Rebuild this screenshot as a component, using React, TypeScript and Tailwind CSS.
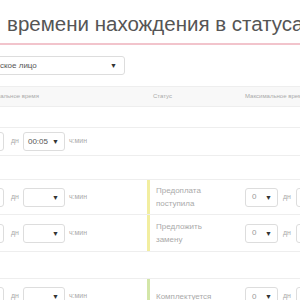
import React from "react";

const Arrow = () => <span className="text-[7px] text-[#333] leading-none">▼</span>;

function TimeInputs({ value = "" }: { value?: string }) {
  return (
    <div className="flex items-center h-full">
      <div className="w-[10px] h-[19px] -ml-[6px] border border-[#ddd] rounded-[3px] bg-white" />
      <span className="ml-[7px] text-[7px] text-[#aaa]">дн</span>
      <div className="ml-[4px] w-[42px] h-[19px] border border-[#ddd] rounded-[3px] bg-white flex items-center justify-between pl-[4px] pr-[5px]">
        <span className="text-[8px] text-[#555]">{value}</span>
        <Arrow />
      </div>
      <span className="ml-[4px] text-[7px] text-[#aaa]">ч:мин</span>
    </div>
  );
}

function RightInputs() {
  return (
    <div className="flex items-center h-full">
      <div className="w-[33px] h-[19px] border border-[#ddd] rounded-[3px] bg-white flex items-center justify-between pl-[6px] pr-[5px]">
        <span className="text-[8px] text-[#999]">0</span>
        <Arrow />
      </div>
      <span className="ml-[5px] text-[7px] text-[#aaa]">дн</span>
      <div className="ml-[5px] w-[30px] h-[19px] border border-[#ddd] rounded-[3px] bg-white" />
    </div>
  );
}

function Row({ h, left, status, bar, right }: { h: string; left?: React.ReactNode; status?: React.ReactNode; bar?: string; right?: React.ReactNode }) {
  return (
    <div className={`flex border-t border-[#eee] ${h}`}>
      <div className="w-[147px] shrink-0">{left}</div>
      <div className={`w-[95px] shrink-0 border-l-[3px] ${bar ?? "border-transparent"} pl-[6px] flex items-center`}>
        <span className="text-[8px] leading-[13px] text-[#aaa] whitespace-nowrap">{status}</span>
      </div>
      <div className="flex-1 pl-[3px]">{right}</div>
    </div>
  );
}

export default function App() {
  return (
    <div className="w-[300px] h-[300px] overflow-hidden bg-white" style={{ fontFamily: '"Liberation Sans", Arial, sans-serif' }}>
      <div className="h-[45px] border-b-2 border-[#f2c4cc] flex items-center pl-[7px] pt-[5px] whitespace-nowrap">
        <h1 className="text-[20.5px] text-[#555]">времени нахождения в статуса</h1>
      </div>

      <div className="mt-[11px] -ml-[6px] w-[131px] h-[19px] border border-[#ddd] rounded-[3px] flex items-center justify-between pl-[5px] pr-[7px]">
        <span className="text-[8px] text-[#555]">ское лицо</span>
        <Arrow />
      </div>

      <div className="mt-[11px] h-[21px] bg-[#f8f8f8] border-y border-[#eee] flex items-center text-[6px] text-[#aaa] whitespace-nowrap">
        <span className="w-[148px] shrink-0 -ml-[4px]">мальное время</span>
        <span className="w-[95px] shrink-0 pl-[9px]">Статус</span>
        <span className="pl-[6px]">Максимальное время</span>
      </div>

      <div className="h-[20px]" />
      <Row h="h-[28px]" left={<TimeInputs value="00:05" />} />
      <Row h="h-[24px]" />
      <Row h="h-[35px]" left={<TimeInputs />} status={<>Предоплата<br />поступила</>} bar="border-[#f2eea0]" right={<RightInputs />} />
      <Row h="h-[37px]" left={<TimeInputs />} status={<>Предложить<br />замену</>} bar="border-[#f2eea0]" right={<RightInputs />} />
      <Row h="h-[27px]" />
      <Row h="h-[36px]" left={<TimeInputs />} status="Комплектуется" bar="border-[#d3e6a8]" right={<RightInputs />} />
    </div>
  );
}
